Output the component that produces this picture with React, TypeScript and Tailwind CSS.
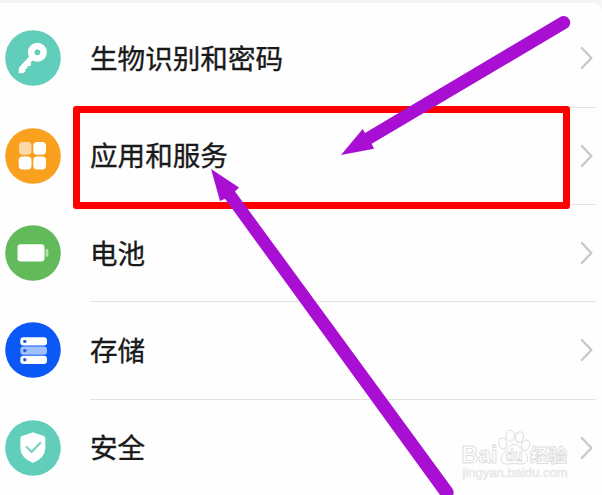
import type { ReactNode } from "react";

interface SettingItem {
  label: string;
  color: string;
  icon: ReactNode;
}

const items: SettingItem[] = [
  {
    label: "生物识别和密码",
    color: "text-[#60cebb]",
    icon: (
      <>
        <circle cx="32.4" cy="22.3" r="6.2" fill="none" stroke="#fff" strokeWidth="6.6" />
        <path
          d="M25.3 25.2 14.3 37.3 13.6 41.9Q13.7 43.3 15 43.3L18.7 43.1 20.5 41.2 20.3 38.9 22.1 38.8 22.4 36.3 25.3 36.2 26.3 33.9 25.6 32.3 29.2 29.2Z"
          fill="#fff"
        />
      </>
    ),
  },
  {
    label: "应用和服务",
    color: "text-[#f9a01f]",
    icon: (
      <g fill="#fff">
        <rect x="14" y="14" width="12.5" height="12.7" rx="4" opacity="0.6" />
        <rect x="28.3" y="14" width="12.7" height="12.7" rx="4" />
        <rect x="13.7" y="28.5" width="12.8" height="13" rx="4" />
        <rect x="28.3" y="28.5" width="12.7" height="13" rx="4" />
      </g>
    ),
  },
  {
    label: "电池",
    color: "text-[#62ba5b]",
    icon: (
      <>
        <rect x="12.5" y="19.3" width="27" height="17.2" rx="3.2" fill="#fff" />
        <rect x="40.6" y="24" width="2.8" height="7.8" rx="1.2" fill="#b5dfb1" />
      </>
    ),
  },
  {
    label: "存储",
    color: "text-[#0a59f7]",
    icon: (
      <>
        <rect x="15.3" y="15.3" width="26.7" height="8.2" rx="3.2" fill="#fff" />
        <rect x="15.3" y="24.5" width="26.7" height="8.2" rx="3.2" fill="#a0bffb" />
        <rect x="15.3" y="33.7" width="26.7" height="8.2" rx="3.2" fill="#fff" />
        <g fill="#1d5fdc">
          <circle cx="19.8" cy="19.4" r="1.7" />
          <circle cx="19.8" cy="28.6" r="1.7" />
          <circle cx="19.8" cy="37.8" r="1.7" />
        </g>
      </>
    ),
  },
  {
    label: "安全",
    color: "text-[#60cebb]",
    icon: (
      <>
        <path
          d="M27.6 12.4Q28 12.2 28.5 12.4L38.7 16Q40.3 16.6 40.3 18.2V28Q40.3 37.5 28 43Q15.4 37.5 15.4 28V18.2Q15.4 16.6 17 16Z"
          fill="#fff"
        />
        <path
          d="m21.6 27 5 4.8 8.6-8.7"
          fill="none"
          stroke="#82d4c5"
          strokeWidth="2.4"
          strokeLinecap="round"
        />
      </>
    ),
  },
];

function SettingRow({ label, color, icon, last }: SettingItem & { last: boolean }) {
  return (
    <li className="flex h-[97.33px] shrink-0 gap-[28.6px] pr-1.5 pl-[5.4px]">
      <svg
        viewBox="0 0 56 56"
        className={`mb-[1.5px] h-14 w-14 shrink-0 self-center ${color}`}
        aria-hidden="true"
      >
        <circle cx="28" cy="28" r="27.8" fill="currentColor" />
        {icon}
      </svg>
      <div
        className={`flex flex-1 items-center justify-between border-b pr-[3px] ${
          last ? "border-transparent" : "border-[#e2e2e2]"
        }`}
      >
        <span className="mb-px text-[27.6px] leading-none text-[#191919] [-webkit-text-stroke:0.35px_#191919]">
          {label}
        </span>
        <svg viewBox="0 0 14 26" className="h-[26px] w-3.5" aria-hidden="true">
          <path
            d="m2.8 3 9.6 10-9.6 10"
            fill="none"
            stroke="#c8c8c8"
            strokeWidth="2.3"
            strokeLinecap="round"
            strokeLinejoin="round"
          />
        </svg>
      </div>
    </li>
  );
}

function Watermark() {
  return (
    <svg
      viewBox="0 0 112 54"
      className="absolute top-[428px] left-[460px] h-[54px] w-28 opacity-95"
      fontFamily='"Liberation Sans", "Noto Sans CJK SC", sans-serif'
    >
      <g fill="#fff" stroke="#dcdcdc" strokeWidth="1">
        <ellipse cx="42.7" cy="15.5" rx="4" ry="5.5" transform="rotate(-10 42.7 15.5)" />
        <ellipse cx="50.2" cy="7.8" rx="4.3" ry="5.5" />
        <ellipse cx="59.5" cy="9.2" rx="4.2" ry="5.5" transform="rotate(10 59.5 9.2)" />
        <ellipse cx="65.6" cy="17.2" rx="4" ry="5.2" transform="rotate(18 65.6 17.2)" />
        <path d="M54 16.5C58 16.5 60 19 62 22C65 25 68 28 67.6 31.5C67 36 62 36.3 58 35.8Q54 35.3 50 35.8C46 36.3 41.5 36 41 31.5C40.7 28 43.5 25 46.5 22C48.5 19 50 16.5 54 16.5Z" />
      </g>
      <g fill="#fff" stroke="#dcdcdc" strokeWidth="0.9">
        <text
          x="1.5"
          y="35"
          fontSize="23.5"
          fontWeight="700"
          textLength="36"
          lengthAdjust="spacingAndGlyphs"
        >
          Bai
        </text>
        <text
          x="45.5"
          y="33"
          fontSize="16"
          fontWeight="700"
          textLength="17"
          lengthAdjust="spacingAndGlyphs"
        >
          du
        </text>
        <text
          x="70"
          y="34"
          fontSize="18.5"
          fontWeight="900"
          textLength="37"
          lengthAdjust="spacingAndGlyphs"
        >
          经验
        </text>
      </g>
      <text
        x="2.5"
        y="48.6"
        fontSize="12"
        fill="#ececec"
        stroke="#e6e6e6"
        strokeWidth="0.5"
        textLength="105"
        lengthAdjust="spacingAndGlyphs"
      >
        jingyan.baidu.com
      </text>
    </svg>
  );
}

function Arrows() {
  return (
    <svg
      viewBox="0 0 602 495"
      className="pointer-events-none absolute inset-0 h-full w-full"
      fill="#a80fd2"
      aria-hidden="true"
    >
      <path d="M341 155 362.7 129 365 133 560.2 17A6.5 6.5 0 0 1 567 28.3L371.7 143.7 374 148.8Z" />
      <path d="M211 169 239 187.5 235 191.5 452 488A6.5 6.5 0 0 1 441.5 497L225 198.7 220 201Z" />
    </svg>
  );
}

export default function App() {
  return (
    <main className="relative flex h-[495px] w-[602px] flex-col overflow-hidden bg-[#f4f5f7] pt-[3px] font-['Noto_Sans_CJK_SC',sans-serif]">
      <ul className="flex flex-1 flex-col rounded-tr-lg bg-[#fefefe] pt-[7.3px]">
        {items.map((item, index) => (
          <SettingRow key={item.label} {...item} last={index === items.length - 1} />
        ))}
      </ul>
      <Watermark />
      <div className="absolute top-[106px] left-[73px] h-[103px] w-[497px] rounded-[3px] border-7 border-[#ff0000]" />
      <Arrows />
    </main>
  );
}
